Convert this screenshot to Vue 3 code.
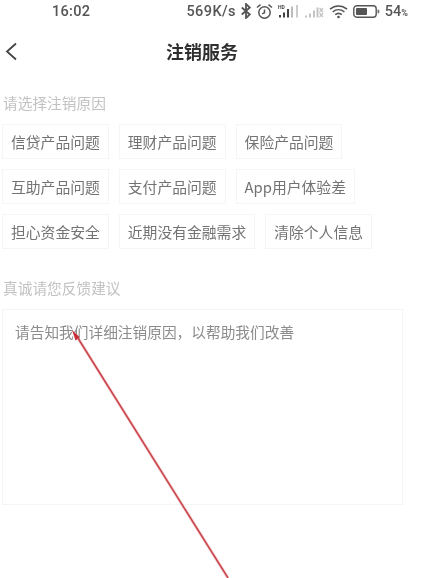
<script setup>
const rows = [
  ['信贷产品问题', '理财产品问题', '保险产品问题'],
  ['互助产品问题', '支付产品问题', 'App用户体验差'],
  ['担心资金安全', '近期没有金融需求', '清除个人信息'],
]
</script>

<template>
  <div class="page">
    <header class="status">
      <span class="time">16:02</span>
      <div class="status-right">
        <span class="speed">569K/s</span>
        <svg class="ic bt" width="10" height="16" viewBox="0 0 10 16" fill="none" stroke="#555" stroke-width="1.8">
          <path d="M0.800 4.500l8 7L5 15V1l3.800 3.500l-8 7" />
        </svg>
        <svg class="ic alarm" width="17" height="17" viewBox="0 0 17 17" fill="none" stroke="#555" stroke-width="1.5">
          <circle cx="8.500" cy="9.500" r="5.700" />
          <path d="M8.500 6.500v3.200l-2.400 1.200M1 4.500L4.500 1.600M16 4.500L12.500 1.600" />
        </svg>
        <svg class="ic" width="21" height="15" viewBox="0 0 21 15">
          <text x="0" y="5" class="hd">HD</text>
          <rect x="1" y="11" width="2" height="2.500" fill="#444" />
          <rect x="5" y="8.500" width="2" height="5" fill="#444" />
          <rect x="9" y="5" width="2" height="8.500" fill="#444" />
          <rect x="13" y="2.500" width="2" height="11" fill="#bbb" />
          <rect x="18" y="1" width="2" height="12.500" fill="#ccc" />
        </svg>
        <svg class="ic" width="20" height="15" viewBox="0 0 20 15" fill="#c4c4c4">
          <rect x="1" y="11.500" width="2" height="2" />
          <rect x="5" y="9.500" width="2" height="4" />
          <rect x="9" y="6.500" width="2" height="7" />
          <rect x="12.500" y="3.500" width="2" height="10" />
          <path d="M15.500 4l3.500 4M19 4l-3.500 4M15.500 9l3.500 4M19 9l-3.500 4" stroke="#c4c4c4" stroke-width="1.200" fill="none" />
        </svg>
        <svg class="ic wifi" width="19" height="15" viewBox="0 0 19 15" fill="none" stroke="#555" stroke-width="1.600">
          <path d="M1 5.200c5-4.300 12-4.300 17 0M3.600 8c3.500-3 8.300-3 11.800 0M6.200 10.700c2-1.700 4.600-1.700 6.600 0" />
          <circle cx="9.500" cy="13" r="1.300" fill="#555" stroke="none" />
        </svg>
        <svg class="ic" width="27" height="13" viewBox="0 0 27 13">
          <rect x="0.800" y="0.800" width="22.400" height="11.400" rx="3" fill="none" stroke="#555" stroke-width="1.400" />
          <rect x="3" y="3" width="11" height="7" rx="1" fill="#555" />
          <rect x="24.500" y="4.500" width="1.800" height="4" rx="0.900" fill="#777" />
        </svg>
        <span class="battery">54<small>%</small></span>
      </div>
    </header>

    <nav class="nav">
      <svg class="back" width="13" height="20" viewBox="0 0 13 20" fill="none" stroke="#444" stroke-width="1.800">
        <path d="M11 1.500L2 9.500l9 8" />
      </svg>
      <h1 class="title">注销服务</h1>
    </nav>

    <main class="content">
      <p class="label">请选择注销原因</p>
      <div class="chips">
        <div v-for="(row, i) in rows" :key="i" class="chip-row">
          <span v-for="c in row" :key="c" class="chip">{{ c }}</span>
        </div>
      </div>
      <p class="label second">真诚请您反馈建议</p>
      <div class="box">请告知我们详细注销原因&#xFF0C;以帮助我们改善</div>
    </main>

    <svg class="arrow" width="434" height="578" viewBox="0 0 434 578">
      <path d="M228 578L76 335" stroke="#e9a6a8" stroke-width="3" fill="none" opacity="0.600" />
      <path d="M228 578L76 335" stroke="#c9434b" stroke-width="1.500" fill="none" />
      <path d="M72 330L79.500 337L75.500 340.500Z" fill="#c8303a" />
    </svg>
  </div>
</template>

<style>
html, body { margin: 0; background: #fff; }
</style>

<style scoped>
.page {
  position: relative;
  width: 434px;
  height: 578px;
  overflow: hidden;
  background: #fff;
  font-family: "Noto Sans CJK SC", "Noto Sans", sans-serif;
  filter: blur(0.35px);
}
.status {
  display: flex;
  align-items: center;
  justify-content: space-between;
  height: 20px;
  padding: 1px 26px 0 52px;
  color: #555;
  font-size: 14.500px;
  font-family: Roboto, sans-serif;
}
.time { font-weight: 500; letter-spacing: 0.300px; }
.status-right { display: flex; align-items: center; gap: 5px; }
.speed { font-weight: 500; letter-spacing: 0.400px; }
.ic { display: block; flex: none; }
.hd { font-size: 5px; font-weight: 700; fill: #444; font-family: Roboto, sans-serif; }
.battery { font-weight: 500; }
.battery small { font-size: 9px; font-weight: 700; }
.nav {
  position: relative;
  display: flex;
  align-items: center;
  justify-content: center;
  height: 38px;
  padding-bottom: 2px;
  margin-top: 11px;
}
.back { position: absolute; left: 5px; top: 10px; }
.title {
  margin: 0 0 0 -30px;
  font-size: 18px;
  line-height: 24px;
  font-weight: 700;
  color: #2f2f2f;
}
.content { padding: 0 0 0 2px; }
.label {
  margin: 21px 0 0 1px;
  font-size: 14.700px;
  line-height: 20px;
  color: #c2c2c2;
}
.label.second { margin-top: 29px; }
.chips {
  display: flex;
  flex-direction: column;
  gap: 10px;
  margin-top: 11px;
}
.chip-row { display: flex; gap: 10px; }
.chip {
  box-sizing: border-box;
  height: 35px;
  padding: 0 8px;
  display: flex;
  align-items: center;
  font-size: 14.800px;
  color: #737373;
  border: 1px solid #f5f5f5;
  white-space: nowrap;
}
.box {
  box-sizing: border-box;
  width: 401px;
  height: 196px;
  margin-top: 11px;
  padding: 12px 12px;
  font-size: 14.700px;
  line-height: 20px;
  color: #8c8c8c;
  border: 1px solid #f4f4f4;
}
.arrow { position: absolute; inset: 0; pointer-events: none; }
</style>
